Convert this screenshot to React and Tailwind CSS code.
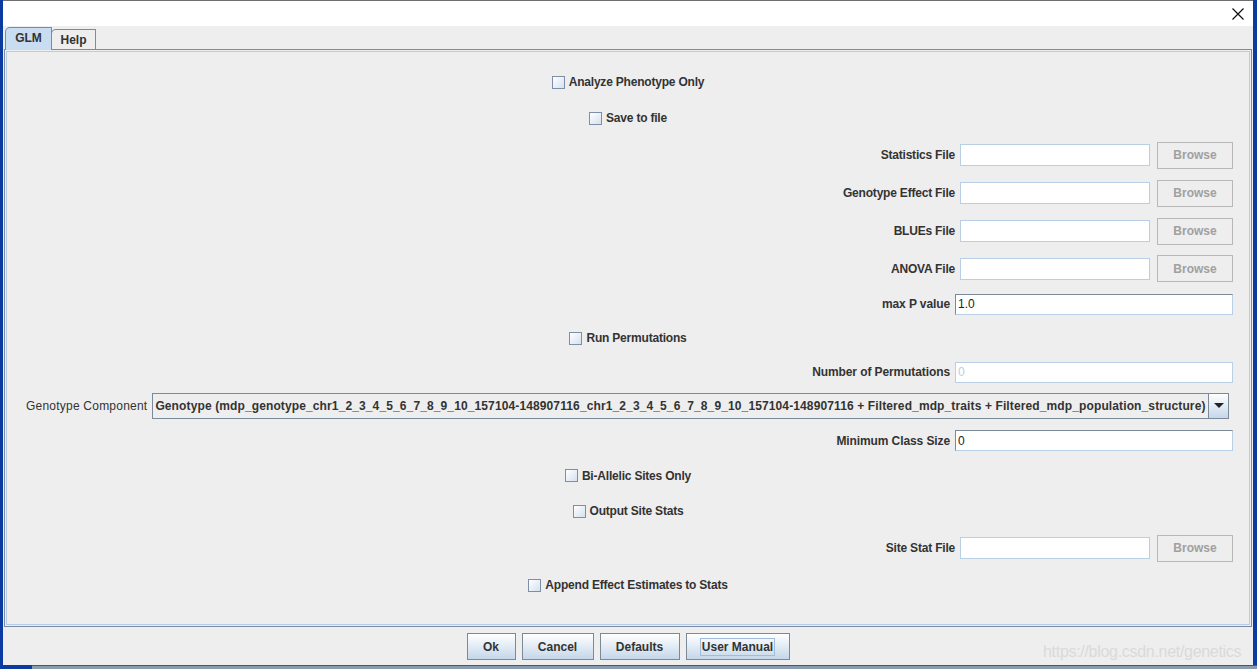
import React from "react";

const font = { fontFamily: '"Liberation Sans", Arial, sans-serif' };

function Check({ label }) {
  return (
    <div className="flex items-center justify-center gap-[4px]">
      <span className="w-[13px] h-[13px] border border-[#7d8ea6] bg-gradient-to-br from-[#ffffff] to-[#d5e1ee]" />
      <span className="text-[12px] font-bold text-[#333333] tracking-[-0.2px]">{label}</span>
    </div>
  );
}

function Row({ h, children, className = "" }) {
  return (
    <div className={`flex items-center ${className}`} style={{ height: h }}>
      {children}
    </div>
  );
}

function FileRow({ h, label }) {
  return (
    <Row h={h} className="justify-end pr-[16px]">
      <span className="text-[12px] font-bold text-[#333333] mr-[5px] tracking-[-0.2px]">{label}</span>
      <div className="w-[190px] h-[22px] bg-white border border-[#b8cfe5]" />
      <button className="ml-[7px] w-[76px] h-[27px] border border-[#b8b8b8] bg-[#eeeeee] text-[12px] font-bold text-[#a0a0a0]">
        Browse
      </button>
    </Row>
  );
}

function FieldRow({ h, label, value, disabled }) {
  return (
    <Row h={h} className="justify-end pr-[16px]">
      <span className="text-[12px] font-bold text-[#333333] mr-[5px] tracking-[-0.1px]">{label}</span>
      <div
        className={`w-[278px] h-[21px] bg-white flex items-center px-[2px] text-[12px] ${
          disabled
            ? "border border-[#b8cfe5] text-[#b8cfe5]"
            : "border border-[#7a8a99] border-b-[#b8cfe5] border-r-[#b8cfe5] text-[#222222]"
        }`}
      >
        {value}
      </div>
    </Row>
  );
}

function Btn({ w, children, focus }) {
  return (
    <button
      className="h-[27px] border border-[#7a8a99] bg-gradient-to-b from-[#ffffff] to-[#c5d7ea] text-[12px] font-bold text-[#333333] flex items-center justify-center"
      style={{ width: w }}
    >
      <span className={focus ? "border border-[#a3bdd8] px-[1px] leading-[16px]" : ""}>{children}</span>
    </button>
  );
}

export default function App() {
  return (
    <div className="w-[1257px] h-[669px] flex flex-col overflow-hidden bg-[#0b3aa0] relative" style={font}>
      <div className="flex h-[665px]">
        <div className="w-[3px] bg-[#0b3aa0]" />
        <div className="flex-1 flex flex-col bg-[#eeeeee]">
          {/* title bar */}
          <div className="h-[26px] bg-white border-t border-[#6e6e6e] flex items-center justify-end pr-[6px]">
            <svg width="12" height="12" viewBox="0 0 12 12" className="mr-[3px]">
              <path d="M0.5 0.5 L11.5 11.5 M11.5 0.5 L0.5 11.5" stroke="#111" strokeWidth="1.2" />
            </svg>
          </div>
          {/* tabs */}
          <div className="h-[23px] flex items-end pl-[2px] relative z-10">
            <div className="h-[23px] w-[47px] bg-[#c8ddf2] border border-b-0 border-[#7a8aa8] rounded-tl-[5px] flex items-center justify-center text-[12px] font-bold text-[#333333] -mb-[1px] pb-[2px]">
              GLM
            </div>
            <div className="h-[20px] w-[45px] bg-[#eeeeee] border border-b-0 border-[#7a8aa8] rounded-tl-[5px] flex items-center justify-center text-[12px] font-bold text-[#333333] -ml-[1px]">
              Help
            </div>
          </div>
          {/* panel */}
          <div className="mx-[1px] h-[578px] border border-[#7a8aa8] bg-[#eeeeee] flex">
            <div className="flex-1 m-[1px] border border-[#b8cce2] flex flex-col pt-[12px]">
              <Row h={36} className="justify-center"><Check label="Analyze Phenotype Only" /></Row>
              <Row h={36} className="justify-center"><Check label="Save to file" /></Row>
              <FileRow h={38} label="Statistics File" />
              <FileRow h={38} label="Genotype Effect File" />
              <FileRow h={38} label="BLUEs File" />
              <FileRow h={37} label="ANOVA File" />
              <FieldRow h={34} label="max P value" value="1.0" />
              <Row h={34} className="justify-center"><Check label="Run Permutations" /></Row>
              <FieldRow h={34} label="Number of Permutations" value="0" disabled />
              <Row h={34} className="pl-[19px] pr-[20px]">
                <span className="text-[12px] text-[#333333] mr-[5px] tracking-[0.22px]">Genotype Component</span>
                <div className="flex-1 h-[26px] border border-[#7a8a99] flex">
                  <div className="flex-1 flex items-center pl-[2px] text-[12px] font-bold text-[#333333] bg-[#eeeeee] whitespace-nowrap overflow-hidden tracking-[0.12px]">
                    Genotype (mdp_genotype_chr1_2_3_4_5_6_7_8_9_10_157104-148907116_chr1_2_3_4_5_6_7_8_9_10_157104-148907116 + Filtered_mdp_traits + Filtered_mdp_population_structure)
                  </div>
                  <div className="w-[20px] border-l border-[#7a8a99] bg-gradient-to-b from-[#ffffff] to-[#c5d7ea] flex items-center justify-center">
                    <svg width="10" height="6" viewBox="0 0 10 6"><path d="M0 0 H10 L5 5 Z" fill="#222" /></svg>
                  </div>
                </div>
              </Row>
              <FieldRow h={35} label="Minimum Class Size" value="0" />
              <Row h={35} className="justify-center"><Check label="Bi-Allelic Sites Only" /></Row>
              <Row h={36} className="justify-center"><Check label="Output Site Stats" /></Row>
              <FileRow h={38} label="Site Stat File" />
              <Row h={36} className="justify-center"><Check label="Append Effect Estimates to Stats" /></Row>
            </div>
          </div>
          {/* buttons */}
          <div className="flex-1 flex justify-center gap-[6px] pt-[6px]">
            <Btn w={49}>Ok</Btn>
            <Btn w={72}>Cancel</Btn>
            <Btn w={80}>Defaults</Btn>
            <Btn w={104} focus>User Manual</Btn>
          </div>
        </div>
        <div className="w-[4px] bg-[#0b3aa0]" />
      </div>
      <div className="h-[4px] flex">
        <div className="w-[32px] bg-[#0b3aa0]" />
        <div className="flex-1 bg-[#8a9cb0] border-t border-[#555]" />
      </div>
      <div className="absolute left-[1043px] top-[640px] text-[16px] text-[#dadada] tracking-[-0.3px]">
        https://blog.csdn.net/genetics
      </div>
    </div>
  );
}
